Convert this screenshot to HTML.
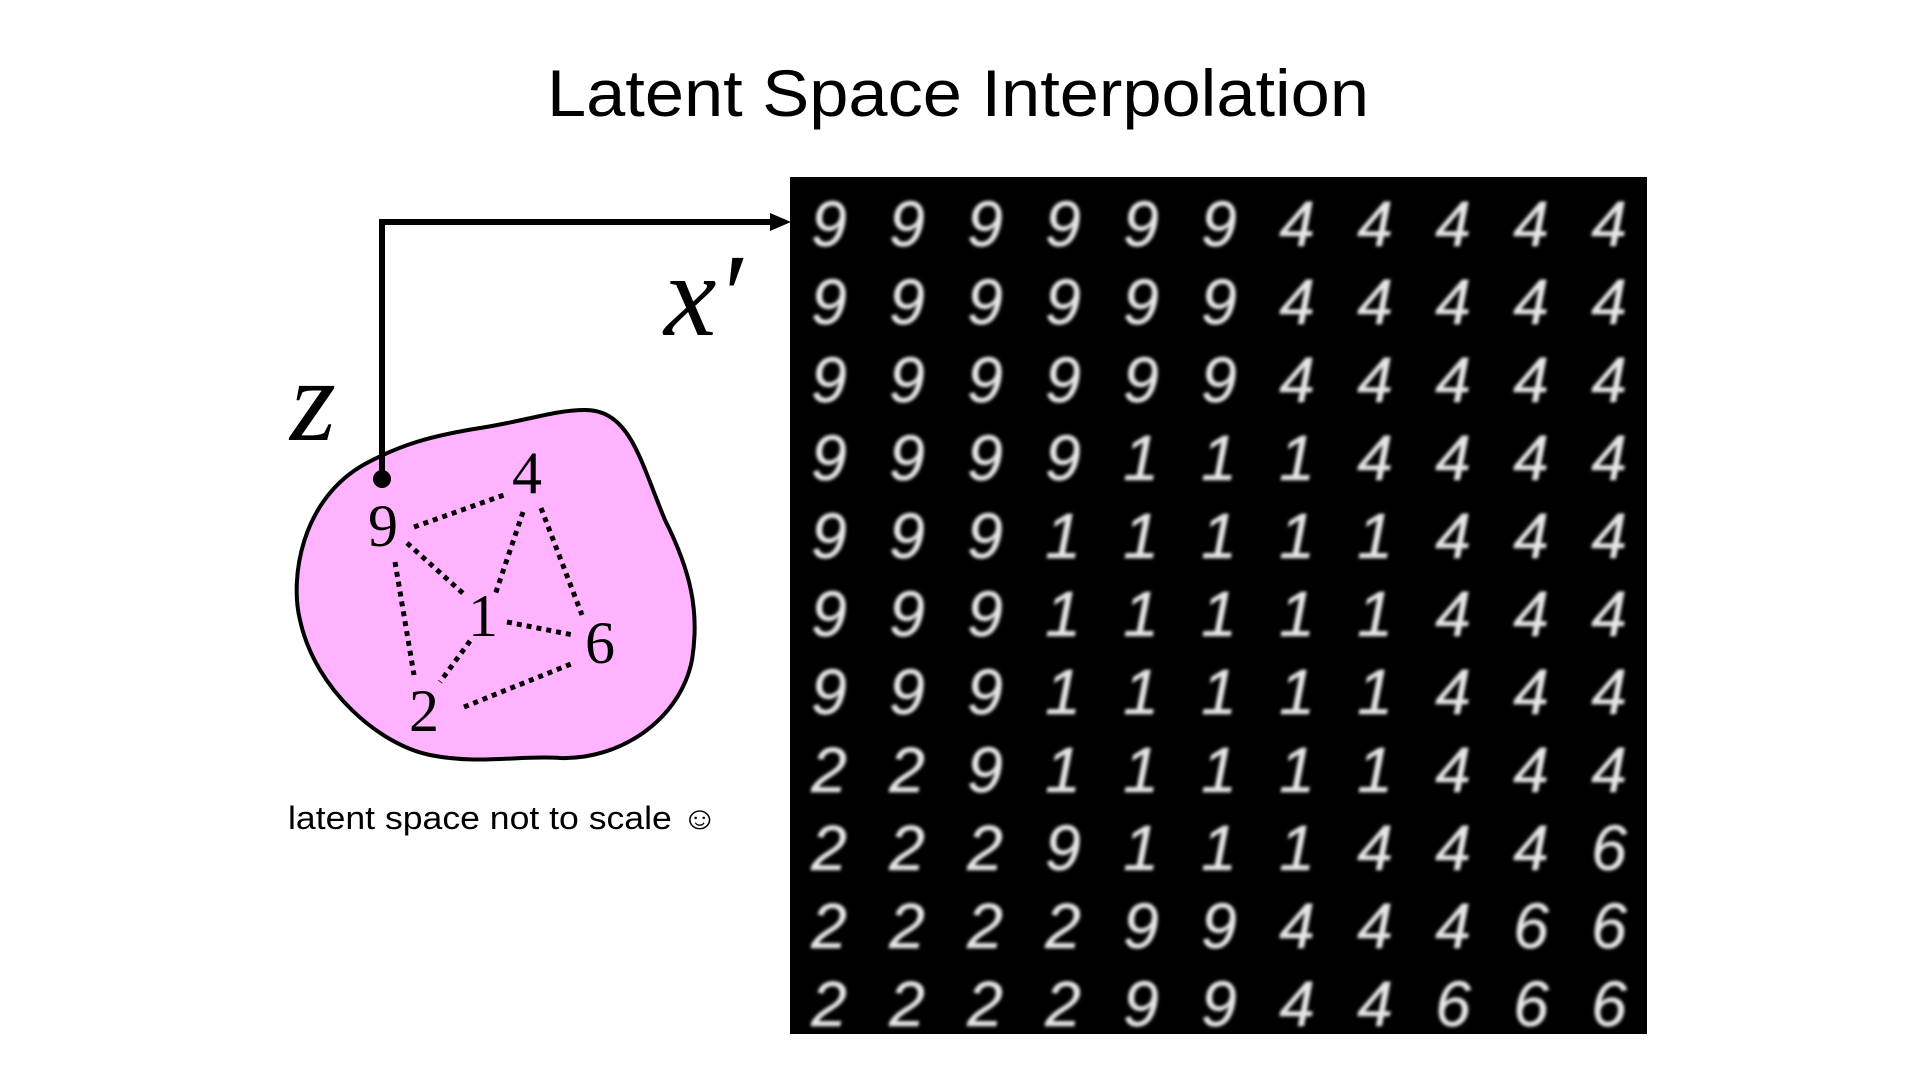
<!DOCTYPE html>
<html><head><meta charset="utf-8"><style>
html,body{margin:0;padding:0;background:#fff;}
body{width:1917px;height:1078px;overflow:hidden;position:relative;}
</style></head><body>
<svg width="1917" height="1078" viewBox="0 0 1917 1078" xmlns="http://www.w3.org/2000/svg" style="position:absolute;left:0;top:0">
<defs><filter id="bl" x="-20%" y="-20%" width="140%" height="140%"><feGaussianBlur stdDeviation="1.5"/></filter></defs>
<text x="958" y="116" text-anchor="middle" font-family="Liberation Sans, sans-serif" font-size="66" textLength="822" lengthAdjust="spacingAndGlyphs" fill="#000">Latent Space Interpolation</text>

<path d="M 365 464 C 300 500, 290 580, 300 620 C 315 690, 380 745, 430 755 C 480 765, 520 755, 560 758 C 620 760, 680 720, 692 660 C 700 610, 690 570, 665 520 C 640 460, 630 410, 585 410 C 555 410, 530 420, 480 428 C 430 436, 400 445, 365 464 Z" fill="#ffb3fe" stroke="#000" stroke-width="4"/>

<g stroke="#000" stroke-width="5" stroke-dasharray="5 5" fill="none">
<line x1="414" y1="527" x2="504" y2="495"/>
<line x1="407" y1="543" x2="466" y2="596"/>
<line x1="395" y1="562" x2="414" y2="675"/>
<line x1="523" y1="512" x2="495" y2="595"/>
<line x1="541" y1="508" x2="582" y2="615"/>
<line x1="507" y1="622" x2="573" y2="635"/>
<line x1="470" y1="641" x2="440" y2="682"/>
<line x1="464" y1="707" x2="571" y2="664"/>
</g>
<g font-family="Liberation Serif, serif" font-size="60" text-anchor="middle" fill="#000">
<text x="383" y="546">9</text><text x="527" y="493">4</text><text x="483" y="636">1</text><text x="600" y="663">6</text><text x="424" y="731">2</text>
</g>

<polyline points="382,479 382,222 772,222" fill="none" stroke="#000" stroke-width="6"/>
<polygon points="770,213 791,222 770,231" fill="#000"/>
<circle cx="382" cy="479" r="9" fill="#000"/>

<text x="290" y="440" font-family="Liberation Serif, serif" font-style="italic" font-size="118" fill="#000">z</text>
<text x="664" y="335" font-family="Liberation Serif, serif" font-style="italic" font-size="118" fill="#000">x′</text>

<text x="288" y="829" font-family="Liberation Sans, sans-serif" font-size="32" textLength="430" lengthAdjust="spacingAndGlyphs" fill="#000">latent space not to scale ☺</text>

<rect x="790" y="177" width="857" height="857" fill="#000"/>
<g font-family="Liberation Sans, sans-serif" font-style="italic" font-size="64" text-anchor="middle" fill="#e6e6e6" filter="url(#bl)" stroke="#e6e6e6" stroke-width="0.5">
<text x="829 907 985 1063 1141 1219 1297 1375 1453 1531 1609" y="246">99999944444</text>
<text x="829 907 985 1063 1141 1219 1297 1375 1453 1531 1609" y="324">99999944444</text>
<text x="829 907 985 1063 1141 1219 1297 1375 1453 1531 1609" y="402">99999944444</text>
<text x="829 907 985 1063 1141 1219 1297 1375 1453 1531 1609" y="480">99991114444</text>
<text x="829 907 985 1063 1141 1219 1297 1375 1453 1531 1609" y="558">99911111444</text>
<text x="829 907 985 1063 1141 1219 1297 1375 1453 1531 1609" y="636">99911111444</text>
<text x="829 907 985 1063 1141 1219 1297 1375 1453 1531 1609" y="714">99911111444</text>
<text x="829 907 985 1063 1141 1219 1297 1375 1453 1531 1609" y="792">22911111444</text>
<text x="829 907 985 1063 1141 1219 1297 1375 1453 1531 1609" y="870">22291114446</text>
<text x="829 907 985 1063 1141 1219 1297 1375 1453 1531 1609" y="948">22229944466</text>
<text x="829 907 985 1063 1141 1219 1297 1375 1453 1531 1609" y="1026">22229944666</text>
</g>
</svg>
</body></html>
